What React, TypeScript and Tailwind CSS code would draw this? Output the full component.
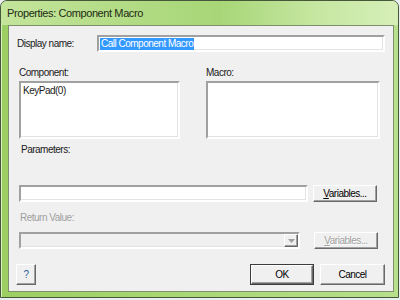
import React from 'react';

const sunken =
  'border-2 border-t-[#a0a0a0] border-l-[#a0a0a0] border-b-[#ffffff] border-r-[#ffffff] shadow-[inset_-1px_-1px_0_#e3e3e3]';
const raised =
  'border border-t-[#ffffff] border-l-[#ffffff] border-b-[#696969] border-r-[#696969] shadow-[inset_-1px_-1px_0_#a0a0a0] bg-[#f0f0f0]';

function Button({
  children,
  className = '',
  disabled = false,
  isDefault = false,
}: {
  children: React.ReactNode;
  className?: string;
  disabled?: boolean;
  isDefault?: boolean;
}) {
  const inner = (
    <div
      className={`${raised} flex h-full w-full items-center justify-center ${
        disabled ? 'text-[#a0a0a0] [text-shadow:1px_1px_0_#ffffff]' : 'text-black'
      }`}
    >
      {children}
    </div>
  );
  if (isDefault) {
    return <div className={`border border-[#3c3c3c] ${className}`}>{inner}</div>;
  }
  return <div className={className}>{inner}</div>;
}

export default function App() {
  return (
    <div className="h-[300px] w-[400px] overflow-hidden bg-[#e9eef0] font-['Liberation_Sans',Arial,sans-serif] text-[10px] leading-[13px] tracking-[-0.5px] text-[#1a1a1a]">
      <div className="flex h-[298px] w-[399px] flex-col overflow-hidden rounded-t-[7px] border border-[#46573a] bg-[linear-gradient(90deg,#9ccf62_0%,#aad877_50%,#b7df8c_100%)] shadow-[inset_1px_1px_0_#d8efc0]">
        {/* title bar */}
        <div className="flex h-[24px] shrink-0 items-center bg-[linear-gradient(90deg,#c4e59c_0%,#b3dc86_30%,#a8d677_55%,#c6e7a2_80%,#d6efb8_100%)] pl-[6px] pt-[1px] text-[11px] tracking-[-0.4px] text-[#1e2a14]">
          Properties: Component Macro
        </div>

        {/* client area */}
        <div className="mb-[5px] ml-[7px] mr-[4px] flex flex-1 flex-col border border-[#7d8f6c] bg-[#f0f0f0]">
          {/* display name */}
          <div className="mt-[9px] flex h-[17px] items-center">
            <div className="ml-[8px] w-[80px]">Display name:</div>
            <div className={`${sunken} flex h-[17px] w-[288px] items-center bg-white pl-[1px]`}>
              <span className="bg-[#3399ff] px-[1px] leading-[12px] text-white">Call Component Macro</span>
            </div>
          </div>

          {/* component / macro lists */}
          <div className="ml-[10px] mt-[14px] flex gap-[26px]">
            <div className="flex flex-col">
              <div className="h-[13px]">Component:</div>
              <div className={`${sunken} mt-[2px] h-[58px] w-[161px] bg-white pl-[2px] pt-[1px]`}>KeyPad(0)</div>
            </div>
            <div className="flex flex-col">
              <div className="h-[13px]">Macro:</div>
              <div className={`${sunken} mt-[2px] h-[58px] w-[174px] bg-white`} />
            </div>
          </div>

          <div className="ml-[12px] mt-[4px] h-[13px]">Parameters:</div>

          {/* parameters */}
          <div className="ml-[10px] mt-[29px] flex h-[17px] gap-[5px]">
            <div className={`${sunken} h-[17px] w-[289px] bg-white`} />
            <Button className="h-[17px] w-[64px]">
              <span>
                <span className="underline">V</span>ariables...
              </span>
            </Button>
          </div>

          <div className="ml-[11px] mt-[9px] h-[13px] text-[#a0a0a0]">Return Value:</div>

          {/* return value */}
          <div className="ml-[10px] mt-[8px] flex h-[17px] gap-[14px]">
            <div className={`${sunken} flex h-[17px] w-[281px] justify-end bg-[#f0f0f0]`}>
              <div className={`${raised} flex h-full w-[14px] items-center justify-center`}>
                <svg width="7" height="4" viewBox="0 0 7 4">
                  <path d="M0 0h7L3.5 4z" fill="#a0a0a0" />
                </svg>
              </div>
            </div>
            <Button className="h-[17px] w-[64px]" disabled>
              <span>
                <span className="underline">V</span>ariables...
              </span>
            </Button>
          </div>

          {/* bottom buttons */}
          <div className="ml-[7px] mt-[15px] flex h-[21px]">
            <Button className="h-[21px] w-[20px]">
              <span className="text-[#2d5f9a]">?</span>
            </Button>
            <Button className="ml-[214px] h-[21px] w-[64px]" isDefault>
              OK
            </Button>
            <Button className="ml-[6px] h-[21px] w-[65px]">Cancel</Button>
          </div>
        </div>
      </div>
    </div>
  );
}
